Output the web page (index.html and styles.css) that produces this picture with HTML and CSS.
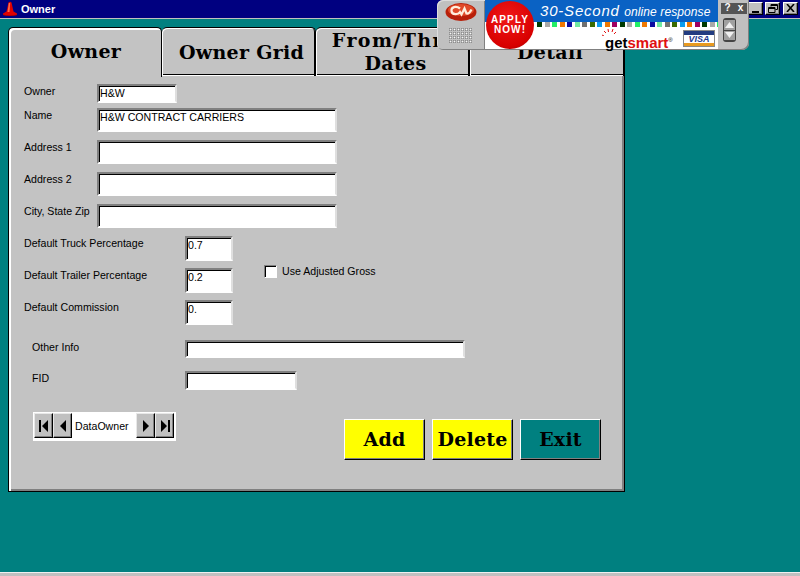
FILE: index.html
```html
<!DOCTYPE html>
<html lang="en">
<head>
<meta charset="utf-8">
<title>Owner</title>
<link rel="stylesheet" href="styles.css">
</head>
<body>
<div class="screen">
  <header class="titlebar">
    <svg class="cone" width="16" height="16" viewBox="0 0 16 16"><path d="M6.500 1.500Q8 0 9.500 1.500L11.500 10.500 15 12.500 15 14Q8 16 1 14L1 12.500 4.500 10.500z" fill="#e00000"/><path d="M6.800 2h1.400L7.500 11H5.500z" fill="#ff6a4c"/><path d="M1 13.500Q8 15.500 15 13.500V14Q8 16 1 14z" fill="#900000"/></svg>
    <span class="title-text">Owner</span>
    <div class="winbtns">
      <span class="winbtn"><i class="w-min"></i></span>
      <span class="winbtn">
        <svg width="10" height="9" viewBox="0 0 10 9"><path d="M3 .5h6.500v5H7.500M3 1.500h6.500M3 .5V2.500" fill="none" stroke="#000"/><path d="M.5 3.500h6.500v5H.5zM.5 4.500h6.500" fill="none" stroke="#000"/></svg>
      </span>
      <span class="winbtn win-close">
        <svg width="9" height="8" viewBox="0 0 9 8"><path d="M1 0l7 8M8 0L1 8" fill="none" stroke="#000" stroke-width="1.600"/></svg>
      </span>
    </div>
  </header>

  <main class="workspace">
    <div class="window">
      <nav class="tabs">
        <div class="tab active">Owner</div>
        <div class="tab">Owner Grid</div>
        <div class="tab"><span><span class="tab-wide">From/Thru</span><br>Dates</span></div>
        <div class="tab">Detail</div>
      </nav>
      <section class="panel">
        <div class="row r-owner"><label class="lbl w73">Owner</label><div class="field f-owner">H&amp;W</div></div>
        <div class="row r-name"><label class="lbl w73">Name</label><div class="field f-wide">H&amp;W CONTRACT CARRIERS</div></div>
        <div class="row r-addr"><label class="lbl w73">Address 1</label><div class="field f-wide"></div></div>
        <div class="row r-addr"><label class="lbl w73">Address 2</label><div class="field f-wide"></div></div>
        <div class="row r-addr"><label class="lbl w73">City, State Zip</label><div class="field f-wide"></div></div>

        <div class="numbers">
          <label class="lbl">Default Truck Percentage</label><div class="field f-num">0.7</div>
          <div class="check"><span class="box"></span><span class="lbl-check">Use Adjusted Gross</span></div>
          <label class="lbl">Default Trailer Percentage</label><div class="field f-num">0.2</div>
          <label class="lbl">Default Commission</label><div class="field f-num">0.</div>
        </div>

        <div class="row r-other"><label class="lbl w153">Other Info</label><div class="field f-other"></div></div>
        <div class="row r-fid"><label class="lbl w153">FID</label><div class="field f-fid"></div></div>

        <div class="footer">
          <div class="navigator">
            <span class="navbtn"><svg width="12" height="14" viewBox="0 0 12 14"><path d="M1 1h2v12H1zM10 1v12L4 7z"/></svg></span>
            <span class="navbtn"><svg width="12" height="14" viewBox="0 0 12 14"><path d="M9 1v12L3 7z"/></svg></span>
            <span class="navname">DataOwner</span>
            <span class="navbtn"><svg width="12" height="14" viewBox="0 0 12 14"><path d="M3 1v12l6-6z"/></svg></span>
            <span class="navbtn"><svg width="12" height="14" viewBox="0 0 12 14"><path d="M2 1v12l6-6zM9 1h2v12H9z"/></svg></span>
          </div>
          <div class="actions">
            <div class="action yellow">Add</div>
            <div class="action yellow">Delete</div>
            <div class="action teal">Exit</div>
          </div>
        </div>
      </section>
    </div>
  </main>

  <div class="statusline"></div>

  <aside class="ad">
    <div class="ad-left">
      <svg width="32" height="20" viewBox="0 0 32 20"><ellipse cx="16" cy="10" rx="15.500" ry="9" fill="#b8200a"/><ellipse cx="16" cy="8" rx="13" ry="6" fill="#e04a28"/><path d="M15 6.500C11 3.500 6 5 6.500 9s6.500 4 8.500 1l1.500 2.500 3-6 2 5c2 .5 4-2 5-4" fill="none" stroke="#ffeedd" stroke-width="2.200"/></svg>
      <div class="dots"></div>
    </div>
    <div class="ad-main">
      <div class="ad-blue"><span class="ad-big">30-Second</span> <span class="ad-small">online response</span></div>
      <div class="ad-squares">
        <i class="c1"></i><i class="c2"></i><i class="c3"></i><i class="c4"></i><i class="c5"></i><i class="c6"></i><i class="c7"></i><i class="c8"></i><i class="c9"></i><i class="c4"></i><i class="c10"></i><i class="c1"></i><i class="c2"></i><i class="c3"></i><i class="c4"></i><i class="c5"></i><i class="c6"></i><i class="c7"></i><i class="c8"></i><i class="c9"></i><i class="c4"></i><i class="c10"></i><i class="c1"></i><i class="c2"></i><i class="c3"></i>
      </div>
      <div class="ad-lower">
        <span class="logo">
          <svg class="burst" width="16" height="8" viewBox="0 0 16 8"><path d="M1 7l2 1M3 3l2 2M7 1l.5 3M12 1l-1 3M15 4l-2 2" stroke="#e01010" fill="none"/></svg>
          <span class="get">get</span><span class="smart">smart</span><sup class="reg">®</sup>
        </span>
        <span class="visa"><span class="visa-t">VISA</span></span>
      </div>
      <div class="apply">APPLY<br>NOW!</div>
    </div>
    <div class="ad-right">
      <div class="ad-top"><span class="ad-q">?</span><span class="ad-q">x</span></div>
      <div class="ad-scroll">
        <span class="ad-arrow"><svg width="9" height="6" viewBox="0 0 9 6"><path d="M4.500 0L9 6H0z" fill="#f0f0f0"/></svg></span>
        <span class="ad-arrow"><svg width="9" height="6" viewBox="0 0 9 6"><path d="M0 0h9L4.500 6z" fill="#f0f0f0"/></svg></span>
      </div>
    </div>
  </aside>
</div>
</body>
</html>
```
FILE: styles.css
```css
* { box-sizing: border-box; }
html, body { margin: 0; padding: 0; }
body { width: 800px; height: 576px; overflow: hidden; background: #008080; font-family: "Liberation Sans", Arial, sans-serif; }
.screen { position: relative; width: 800px; height: 576px; display: flex; flex-direction: column; overflow: hidden; }

.titlebar { flex: none; height: 19px; background: #000080; border-bottom: 1px solid #c0c0c0; display: flex; align-items: center; padding-left: 2px; color: #fff; }
.cone { flex: none; }
.title-text { margin-left: 3px; font: bold 11px "Liberation Sans", Arial, sans-serif; }
.winbtns { margin-left: auto; display: flex; margin-right: 2px; margin-top: -2px; }
.winbtn { width: 15px; height: 13px; background: #c0c0c0; border: 1px solid; border-color: #fff #000 #000 #fff; box-shadow: inset -1px -1px #808080; display: flex; align-items: center; justify-content: center; }
.winbtn + .winbtn { margin-left: 2px; }
.win-close { margin-left: 3px !important; }
.w-min { width: 7px; height: 2px; background: #000; margin-top: 7px; }

.workspace { flex: 1; padding: 8px 0 0 8px; }
.window { width: 617px; }
.tabs { display: flex; height: 49px; background: #008080; }
.tab { width: 154px; flex: none; background: #c3c3c3; border: 1px solid #000; border-left: 0; border-bottom: 0; border-radius: 5px 5px 0 0; box-shadow: inset 1px 1px #fff, inset -1px 0 #000, inset 0 -1px #fff, inset 0 -2px #000; display: flex; align-items: center; justify-content: center; text-align: center; font: bold 19px/23px "DejaVu Serif", "Liberation Serif", serif; color: #000; padding: 0 2px 0 8px; letter-spacing: 0.3px; }
.tab-wide { letter-spacing: 1.400px; white-space: nowrap; }
.tab.active { border-left: 1px solid #000; box-shadow: inset 2px 2px #fff; z-index: 1; height: 50px; padding: 0 6px 3px 8px; }
.tab:last-child { width: 155px; }

.panel { height: 416px; background: #c3c3c3; border: 1px solid #000; border-top: 0; box-shadow: inset 2px 0 #fff, inset -2px -2px #808080; padding: 8px 0 0 15px; font-size: 11px; color: #000; }
.row { display: flex; align-items: flex-start; }
.r-name { margin-top: 5px; }
.r-addr { margin-top: 8px; }
.r-other { margin-top: 15px; padding-left: 8px; }
.r-fid { margin-top: 13px; padding-left: 8px; }
.lbl { display: block; flex: none; padding-top: 1px; line-height: 12px; font-size: 10.6px; }
.w73 { width: 73px; }
.w153 { width: 153px; }
.field { flex: none; background: #fff; border: 2px solid; border-color: #808080 #dfdfdf #fff #808080; box-shadow: inset 1px 1px #000; padding: 1px 0 0 1px; font-size: 10.6px; line-height: 13px; white-space: nowrap; }
.f-owner { width: 80px; height: 19px; }
.f-wide { width: 240px; height: 24px; }
.f-num { width: 48px; height: 25px; }
.f-other { width: 280px; height: 18px; }
.f-fid { width: 112px; height: 19px; }

.numbers { margin-top: 8px; display: grid; grid-template-columns: 161px 48px auto; grid-auto-rows: 25px; row-gap: 7px; justify-content: start; align-items: start; }
.check { grid-column: 3; grid-row: 1 / span 3; margin: 28px 0 0 31px; display: flex; align-items: center; height: 14px; }
.box { width: 13px; height: 13px; background: #fff; border: 1px solid; border-color: #808080 #fff #fff #808080; box-shadow: inset 1px 1px #000; flex: none; }
.lbl-check { margin-left: 5px; white-space: nowrap; font-size: 10.6px; }

.footer { display: flex; align-items: flex-start; margin-top: 22px; padding-left: 9px; }
.navigator { width: 143px; height: 29px; background: #fff; padding: 1px 2px 3px 1px; display: flex; align-items: stretch; flex: none; }
.navbtn { width: 19px; flex: none; background: #c0c0c0; border: 1px solid #000; border-color: #e8e8e8 #000 #000 #e8e8e8; box-shadow: inset -1px -1px #808080; display: flex; align-items: center; justify-content: center; }
.navname { flex: 1; font-size: 10.6px; line-height: 26px; padding-left: 3px; }
.actions { display: flex; gap: 7px; margin: 7px 0 0 168px; }
.action { width: 81px; height: 41px; border: 1px solid; border-color: #fff #000 #000 #fff; box-shadow: inset -1px -1px #808080; display: flex; align-items: center; justify-content: center; padding-bottom: 2px; font: bold 19px "DejaVu Serif", "Liberation Serif", serif; letter-spacing: 0.2px; }
.yellow { background: #ff0; }
.teal { background: #008080; }

.statusline { flex: none; height: 4px; background: #c0c0c0; border-top: 1px solid #f0f0f0; }

.ad { position: absolute; left: 437px; top: 0; width: 312px; height: 50px; display: flex; }
.ad-left { width: 48px; background: #c0c0c0; border-radius: 6px 0 0 6px; box-shadow: inset 1px 1px #dcdcdc, inset -1px -1px #808080; display: flex; flex-direction: column; align-items: center; padding-top: 2px; }
.dots { width: 24px; height: 16px; margin-top: 6px; background-image: radial-gradient(circle at 1.500px 1.500px, #f8f8f8 .9px, #666 1.100px, transparent 1.800px); background-size: 4px 4px; }
.ad-main { position: relative; width: 233px; background: #fff; border-bottom: 1px solid #808080; display: flex; flex-direction: column; }
.ad-blue { flex: none; height: 22px; background: #0a62c4; color: #fff; text-align: left; padding-left: 55px; font-style: italic; white-space: nowrap; line-height: 22px; }
.ad-big { font: italic 15px "Liberation Sans", Arial, sans-serif; letter-spacing: .8px; }
.ad-small { font: italic 12px "Liberation Sans", Arial, sans-serif; letter-spacing: 0.1px; }
.ad-squares { flex: none; display: flex; gap: 2.500px; height: 5px; padding-left: 52px; overflow: hidden; }
.ad-squares i { flex: none; width: 5px; height: 5px; }
.c1 { background: #003a00; } .c2 { background: #a8a8a8; } .c3 { background: #22ee66; } .c4 { background: #f07800; }
.c5 { background: #0a0aa0; } .c6 { background: #70e8a0; } .c7 { background: #707070; } .c8 { background: #3a6a00; }
.c9 { background: #0a9cf0; } .c10 { background: #a00060; }
.ad-lower { flex: none; height: 22px; display: flex; align-items: flex-start; padding: 3px 0 0 120px; }
.logo { position: relative; width: 78px; white-space: nowrap; font: bold 15px/20px "Liberation Sans", Arial, sans-serif; }
.burst { position: absolute; left: -4px; top: -2px; }
.get { color: #000; }
.smart { color: #e01010; }
.reg { font-size: 6px; font-weight: normal; }
.visa { width: 32px; height: 17px; margin-top: 0; background: linear-gradient(#223c80 0 4px, #fff 4px 12px, #e89a20 12px); border: 1px solid #888; display: flex; align-items: center; justify-content: center; }
.visa-t { font: italic bold 9px "Liberation Sans", Arial, sans-serif; color: #1a3a90; }
.apply { position: absolute; left: 1px; top: 1px; width: 48px; height: 48px; border-radius: 50%; background: radial-gradient(circle at 45% 35%, #f01818, #d80000 70%, #800000); color: #fff; font: bold 10px/10px "Liberation Sans", Arial, sans-serif; text-align: center; padding-top: 14px; letter-spacing: 1.100px; }
.ad-right { width: 31px; background: #c0c0c0; border-radius: 0 0 7px 0; box-shadow: inset -1px -1px #808080; display: flex; flex-direction: column; align-items: flex-start; padding: 3px 0 0 3px; }
.ad-top { display: flex; }
.ad-q { width: 13px; height: 11px; background: #555; color: #fff; font: bold 10px/10px "Liberation Sans", Arial, sans-serif; text-align: center; }
.ad-scroll { margin: 4px 0 0 2px; width: 13px; height: 24px; background: #444; border-radius: 3px; padding: 2px 1px; display: flex; flex-direction: column; gap: 1px; }
.ad-arrow { flex: 1; background: #a0a0a0; display: flex; align-items: center; justify-content: center; }
```
